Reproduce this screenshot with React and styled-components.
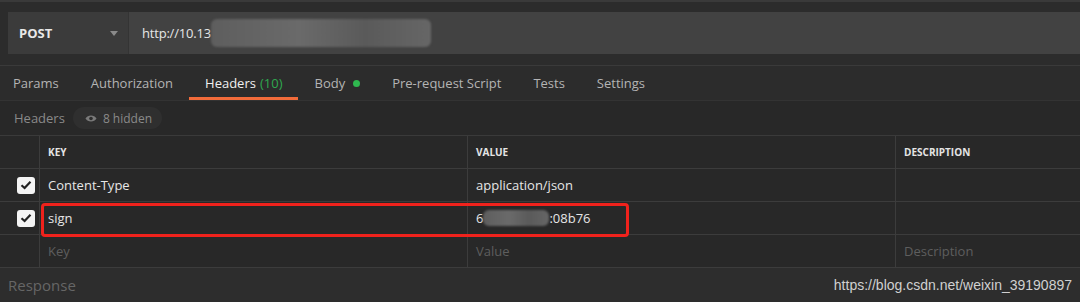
import React from "react";
import styled, { createGlobalStyle } from "styled-components";

const TABS = [
  { name: "Params" },
  { name: "Authorization" },
  { name: "Headers", count: "(10)", active: true },
  { name: "Body", dot: true },
  { name: "Pre-request Script" },
  { name: "Tests" },
  { name: "Settings" }
];

const ROWS = [
  { key: "Content-Type", value: "application/json", checked: true },
  { key: "sign", value: "masked", checked: true, marked: true },
  { key: "Key", value: "Value", description: "Description", placeholder: true }
];

const GlobalStyle = createGlobalStyle`
  html, body {
    margin: 0;
    padding: 0;
    background: #2b2b2b;
  }
  body {
    font-family: "Open Sans", "Noto Sans", sans-serif;
  }
`;

const Check = () => (
  <svg width="12" height="10" viewBox="0 0 12 10">
    <path d="M1.5 5.2 L4.6 8 L10.5 1.8" fill="none" stroke="#222" strokeWidth="2.2" />
  </svg>
);

const Eye = () => (
  <svg width="12" height="9" viewBox="0 0 12 9">
    <path d="M0.5 4.5 C2.7 0.6 9.3 0.6 11.5 4.5 C9.3 8.4 2.7 8.4 0.5 4.5 Z" fill="#7a7a7a" />
    <circle cx="6" cy="4.5" r="1.8" fill="#2e2e2e" />
  </svg>
);

const App = () => {
  return (
    <>
      <GlobalStyle />
      <Page>
        <UrlBar>
          <MethodSelect>
            <MethodName>POST</MethodName>
            <Caret />
          </MethodSelect>
          <UrlInput>
            http://10.13
            <Smudge $width={220} $height={28} />
          </UrlInput>
        </UrlBar>

        <TabRow>
          {TABS.map((tab) => (
            <Tab key={tab.name} $active={tab.active}>
              {tab.name}
              {tab.count && <Count>{tab.count}</Count>}
              {tab.dot && <Dot />}
            </Tab>
          ))}
        </TabRow>

        <SubBar>
          <SubTitle>Headers</SubTitle>
          <HiddenPill>
            <Eye />
            8 hidden
          </HiddenPill>
        </SubBar>

        <Table>
          <HeadCell />
          <HeadCell>KEY</HeadCell>
          <HeadCell>VALUE</HeadCell>
          <HeadCell>DESCRIPTION</HeadCell>
          {ROWS.map((row) => (
            <React.Fragment key={row.key}>
              <CheckCell>{row.checked && <Box><Check /></Box>}</CheckCell>
              <Cell $placeholder={row.placeholder}>
                {row.key}
                {row.marked && <Marker />}
              </Cell>
              <Cell $placeholder={row.placeholder}>
                {row.value === "masked" ? (
                  <>
                    6<Smudge $width={66} $height={16} />:08b76
                  </>
                ) : (
                  row.value
                )}
              </Cell>
              <Cell $placeholder={row.placeholder}>{row.description}</Cell>
            </React.Fragment>
          ))}
        </Table>

        <ResponseBar>
          <ResponseLabel>Response</ResponseLabel>
          <Watermark>https://blog.csdn.net/weixin_39190897</Watermark>
        </ResponseBar>
      </Page>
    </>
  );
};

const Page = styled.div`
  width: 1080px;
  height: 302px;
  overflow: hidden;
  background: #2c2c2c;
  border-top: 2px solid #3a3a3a;
  box-sizing: border-box;
  display: flex;
  flex-direction: column;
`;

const UrlBar = styled.div`
  margin: 10px 0 0 8px;
  height: 42px;
  display: flex;
`;

const MethodSelect = styled.div`
  width: 121px;
  box-sizing: border-box;
  padding: 0 10px 0 11px;
  background: #3b3b3b;
  border-right: 1px solid #343434;
  display: flex;
  align-items: center;
  justify-content: space-between;
`;

const MethodName = styled.span`
  color: #e8e8e8;
  font-size: 13px;
  font-weight: 700;
`;

const Caret = styled.span`
  width: 0;
  height: 0;
  border-left: 4px solid transparent;
  border-right: 4px solid transparent;
  border-top: 5px solid #8a8a8a;
`;

const UrlInput = styled.div`
  flex: 1;
  background: #424242;
  padding-left: 13px;
  display: flex;
  align-items: center;
  color: #e6e6e6;
  font-size: 13px;
  letter-spacing: -0.2px;
`;

const Smudge = styled.span`
  display: inline-block;
  width: ${(p) => p.$width}px;
  height: ${(p) => p.$height}px;
  background: linear-gradient(90deg, #5e5e5e, #6a6a6a 40%, #5a5a5a 70%, #666 100%);
  border-radius: 6px;
  filter: blur(1px);
`;

const TabRow = styled.div`
  margin-top: 11px;
  height: 34px;
  border-top: 1px solid #3a3a3a;
  border-bottom: 1px solid #333;
  display: flex;
  align-items: stretch;
`;

const Tab = styled.div`
  padding: 3px 16px 0;
  display: flex;
  align-items: center;
  gap: 4px;
  font-size: 13px;
  color: ${(p) => (p.$active ? "#f0f0f0" : "#b4b4b4")};
  border-bottom: 3px solid ${(p) => (p.$active ? "#f26b3a" : "transparent")};
  &:first-child {
    padding-left: 13px;
  }
`;

const Count = styled.span`
  color: #2fa84f;
`;

const Dot = styled.span`
  width: 7px;
  height: 7px;
  border-radius: 50%;
  background: #2fb84f;
  margin-left: 4px;
`;

const SubBar = styled.div`
  height: 34px;
  background: #282828;
  display: flex;
  align-items: center;
  padding-left: 14px;
  gap: 8px;
`;

const SubTitle = styled.span`
  color: #8a8a8a;
  font-size: 13px;
`;

const HiddenPill = styled.span`
  height: 22px;
  padding: 0 10px 0 12px;
  border-radius: 11px;
  background: #2f2f2f;
  display: flex;
  align-items: center;
  gap: 6px;
  color: #8a8a8a;
  font-size: 12px;
`;

const Table = styled.div`
  display: grid;
  grid-template-columns: 39px 428px 428px 1fr;
  grid-auto-rows: 33px;
  background: #282828;
  border-top: 1px solid #3a3a3a;
`;

const HeadCell = styled.div`
  border-bottom: 1px solid #3c3c3c;
  border-left: 1px solid #3c3c3c;
  display: flex;
  align-items: center;
  padding-left: 8px;
  color: #e4e4e4;
  font-size: 10px;
  font-weight: 700;
  &:first-child {
    border-left: none;
  }
`;

const CheckCell = styled.div`
  border-bottom: 1px solid #3c3c3c;
  display: flex;
  align-items: center;
  justify-content: flex-end;
  padding-right: 4px;
`;

const Box = styled.span`
  width: 18px;
  height: 17px;
  border-radius: 3px;
  background: #f4f4f4;
  display: flex;
  align-items: center;
  justify-content: center;
`;

const Cell = styled.div`
  position: relative;
  border-bottom: 1px solid #3c3c3c;
  border-left: 1px solid #3c3c3c;
  display: flex;
  align-items: center;
  padding-left: 8px;
  font-size: 13px;
  color: ${(p) => (p.$placeholder ? "#5e5e5e" : "#e6e6e6")};
`;

const Marker = styled.span`
  position: absolute;
  left: 1px;
  top: 1px;
  width: 588px;
  height: 34px;
  border: 3px solid #f0221c;
  border-radius: 4px;
  box-sizing: border-box;
  pointer-events: none;
  z-index: 2;
`;

const ResponseBar = styled.div`
  flex: 1;
  background: #2d2d2d;
  display: flex;
  align-items: center;
  justify-content: space-between;
  padding: 0 8px;
`;

const ResponseLabel = styled.span`
  color: #666;
  font-size: 15px;
`;

const Watermark = styled.span`
  font-family: "Liberation Sans", Arial, sans-serif;
  color: #d0d0d0;
  font-size: 14px;
`;

export default App;
